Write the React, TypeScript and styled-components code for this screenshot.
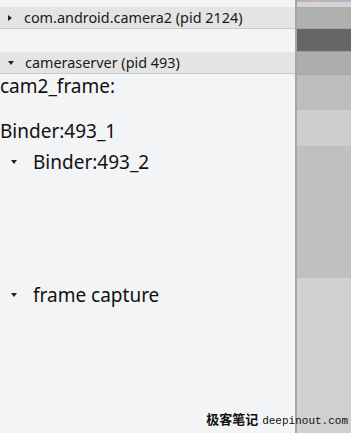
import React from "react";
import styled, { createGlobalStyle } from "styled-components";

const Global = createGlobalStyle`
  html, body { margin: 0; padding: 0; background: #f3f4f6; }
  body { font-family: "Noto Sans", "Open Sans", sans-serif; color: #111; }
`;

const Page = styled.div`
  display: flex;
  width: 351px;
  height: 433px;
  overflow: hidden;
  position: relative;
`;

const Left = styled.div`
  width: 295px;
  display: flex;
  flex-direction: column;
  background: #f3f4f6;
`;

const Divider = styled.div`
  width: 2px;
  background: #a6a6a6;
`;

const Right = styled.div`
  flex: 1;
  display: flex;
  flex-direction: column;
`;

const Strip = styled.div<{ $h: number; $c: string }>`
  height: ${(p) => p.$h}px;
  background: ${(p) => p.$c};
`;

const TopColor = styled.div`
  height: 2px;
  background: linear-gradient(90deg, #b9a8c8, #c9b6a9, #a9b4c9, #c8a9c0);
`;

const Group = styled.div<{ $top: number }>`
  margin-top: ${(p) => p.$top}px;
  height: 21px;
  background: #e4e4e4;
  border-bottom: 1px solid #c9c9c9;
  display: flex;
  align-items: center;
  font-size: 14.4px;
  color: #1a1a1a;
`;

const Arrow = styled.span<{ $open?: boolean; $size: number; $x: number }>`
  display: inline-block;
  width: 0;
  height: 0;
  margin-left: ${(p) => p.$x}px;
  ${(p) =>
    p.$open
      ? `border-left: ${p.$size}px solid transparent; border-right: ${p.$size}px solid transparent; border-top: ${p.$size + 1}px solid #222;`
      : `border-top: ${p.$size}px solid transparent; border-bottom: ${p.$size}px solid transparent; border-left: ${p.$size + 1}px solid #222;`}
`;

const GroupLabel = styled.span<{ $gap: number }>`
  margin-left: ${(p) => p.$gap}px;
`;

const Body = styled.div`
  display: flex;
  flex-direction: column;
  font-size: 19px;
  color: #111;
`;

const Line = styled.div<{ $top: number }>`
  margin-top: ${(p) => p.$top}px;
  height: 24px;
  line-height: 24px;
  display: flex;
  align-items: center;
`;

const Label = styled.span<{ $gap: number }>`
  margin-left: ${(p) => p.$gap}px;
`;

const Watermark = styled.div`
  position: absolute;
  right: 3px;
  bottom: 5px;
  display: flex;
  align-items: baseline;
  gap: 4px;
  color: #111;
`;

const Cjk = styled.span`
  font-family: "Noto Sans CJK SC", sans-serif;
  font-weight: 700;
  font-size: 13px;
`;

const Mono = styled.span`
  font-family: "Liberation Mono", monospace;
  font-size: 11px;
`;

export default function App() {
  return (
    <>
      <Global />
      <Page>
        <Left>
          <Group $top={7}>
            <Arrow $size={3} $x={8} />
            <GroupLabel $gap={12}>com.android.camera2 (pid 2124)</GroupLabel>
          </Group>
          <Group $top={23}>
            <Arrow $open $size={3} $x={8} />
            <GroupLabel $gap={11}>cameraserver (pid 493)</GroupLabel>
          </Group>
          <Body>
            <Line $top={0}>cam2_frame:</Line>
            <Line $top={21}>Binder:493_1</Line>
            <Line $top={7}>
              <Arrow $open $size={3} $x={11} />
              <Label $gap={16}>Binder:493_2</Label>
            </Line>
            <Line $top={109}>
              <Arrow $open $size={3} $x={11} />
              <Label $gap={16}>frame capture</Label>
            </Line>
          </Body>
        </Left>
        <Divider />
        <Right>
          <TopColor />
          <Strip $h={5} $c="#d4d4d4" />
          <Strip $h={21} $c="#b0b0b0" />
          <Strip $h={1} $c="#a2a2a2" />
          <Strip $h={22} $c="#666666" />
          <Strip $h={1} $c="#9a9a9a" />
          <Strip $h={22} $c="#adadad" />
          <Strip $h={1} $c="#a5a5a5" />
          <Strip $h={35} $c="#bdbdbd" />
          <Strip $h={36} $c="#cecece" />
          <Strip $h={132} $c="#c0c0c0" />
          <Strip $h={155} $c="#d0d0d0" />
        </Right>
        <Watermark>
          <Cjk>极客笔记</Cjk>
          <Mono>deepinout.com</Mono>
        </Watermark>
      </Page>
    </>
  );
}
